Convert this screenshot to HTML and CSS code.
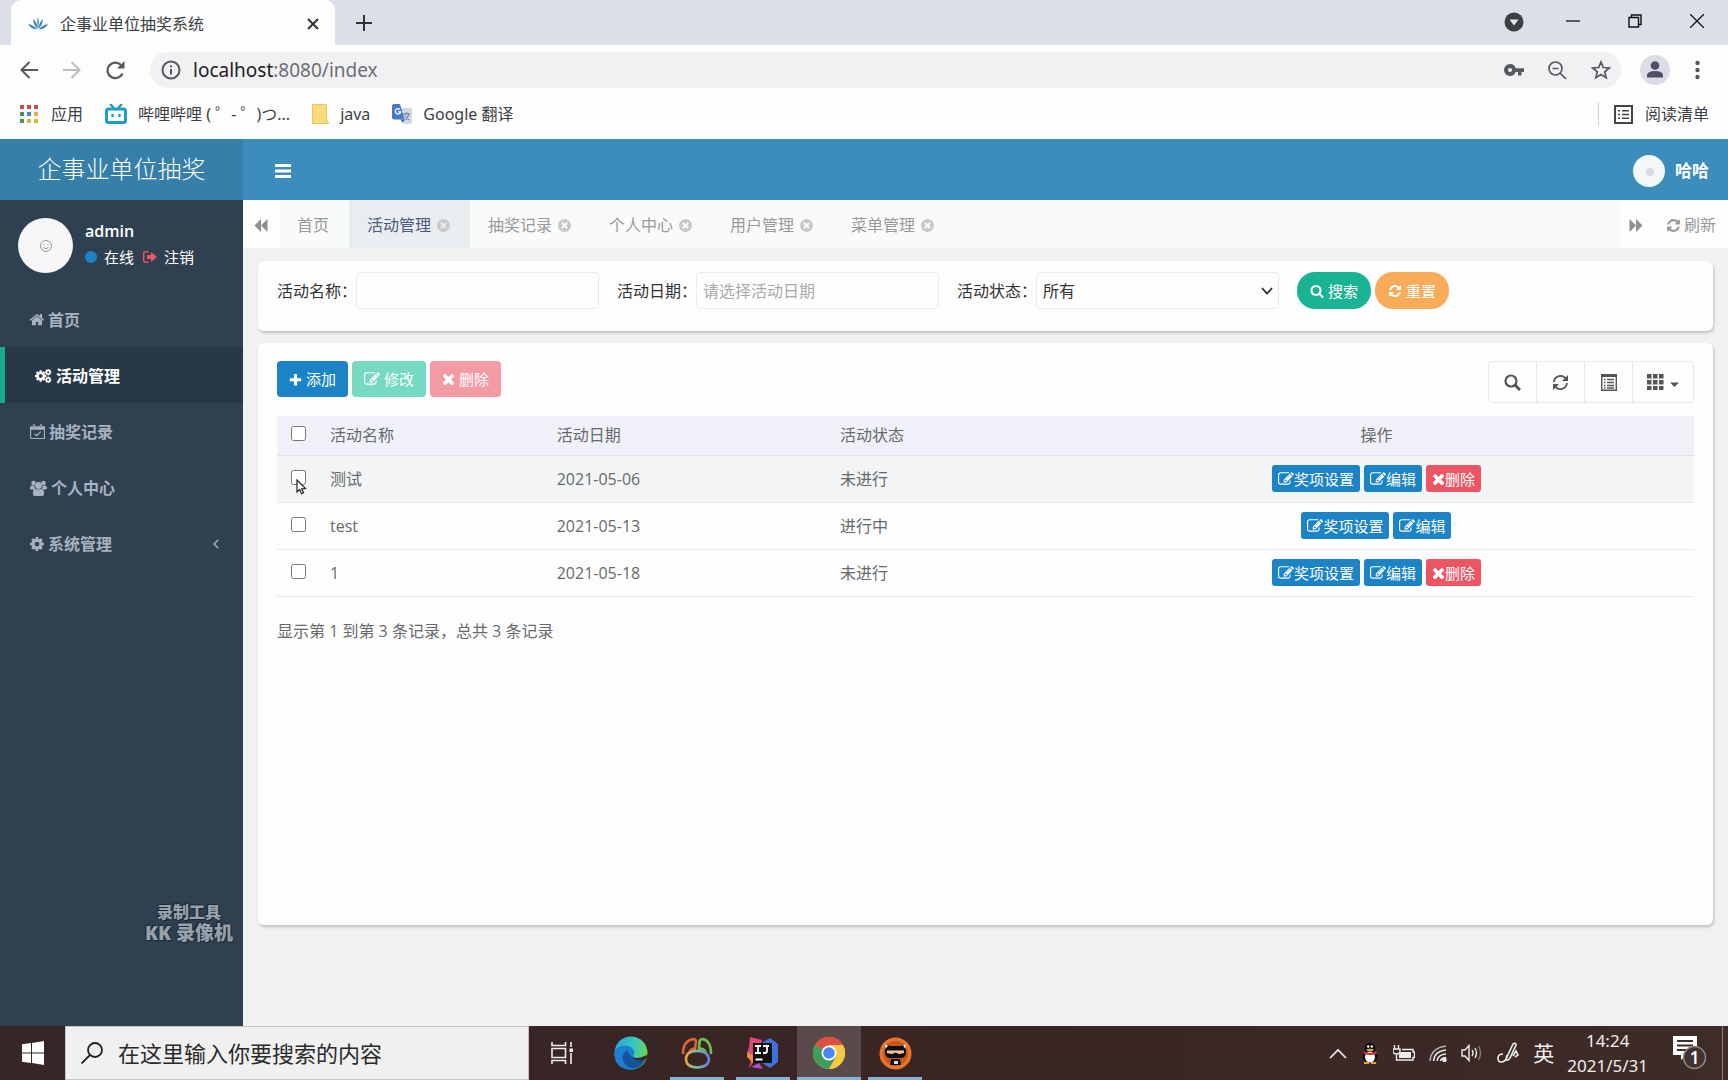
FILE: index.html
```html
<!DOCTYPE html>
<html lang="zh-CN">
<head>
<meta charset="utf-8">
<title>企事业单位抽奖系统</title>
<link rel="stylesheet" href="styles.css">
</head>
<body>
<svg class="sprite" aria-hidden="true">
  <symbol id="home" viewBox="100 130 1592 1592"><path d="M1472 992v480q0 26-19 45t-45 19h-384v-384h-256v384h-384q-26 0-45-19t-19-45v-480q0-1 .5-3t.5-3l575-474 575 474q1 2 1 6zm223-69l-62 74q-8 9-21 11h-3q-13 0-21-7l-692-577-692 577q-12 8-24 7-13-2-21-11l-62-74q-8-10-7-23.500t11-21.500l719-599q32-26 76-26t76 26l244 204v-195q0-14 9-23t23-9h192q14 0 23 9t9 23v408l219 182q10 8 11 21.500t-7 23.500z"/></symbol>
  <symbol id="search" viewBox="0 0 1792 1792"><path d="M1216 832q0-185-131.500-316.500t-316.500-131.500-316.500 131.500-131.500 316.500 131.500 316.500 316.500 131.500 316.500-131.500 131.500-316.500zm512 832q0 52-38 90t-90 38q-54 0-90-38l-343-342q-179 124-399 124-143 0-273.500-55.500t-225-150-150-225-55.500-273.500 55.500-273.500 150-225 225-150 273.500-55.500 273.500 55.500 225 150 150 225 55.500 273.500q0 220-124 399l343 343q37 37 37 90z"/></symbol>
  <symbol id="refresh" viewBox="0 0 1792 1792"><path d="M1639 1056q0 5-1 7-64 268-268 434.500t-478 166.500q-146 0-282.500-55t-243.500-157l-129 129q-19 19-45 19t-45-19-19-45v-448q0-26 19-45t45-19h448q26 0 45 19t19 45-19 45l-137 137q71 66 161 102t187 36q134 0 250-65t186-179q11-17 53-117 8-23 30-23h192q13 0 22.500 9.500t9.500 22.500zm25-800v448q0 26-19 45t-45 19h-448q-26 0-45-19t-19-45 19-45l138-138q-148-137-349-137-134 0-250 65t-186 179q-11 17-53 117-8 23-30 23h-199q-13 0-22.500-9.500t-9.500-22.500v-7q65-268 270-434.500t480-166.500q146 0 284 55.500t245 156.500l130-129q19-19 45-19t45 19 19 45z"/></symbol>
  <symbol id="close" viewBox="0 0 1792 1792"><path d="M1277 1122q0-26-19-45l-181-181 181-181q19-19 19-45 0-27-19-46l-90-90q-19-19-46-19-26 0-45 19l-181 181-181-181q-19-19-45-19-27 0-46 19l-90 90q-19 19-19 46 0 26 19 45l181 181-181 181q-19 19-19 45 0 27 19 46l90 90q19 19 46 19 26 0 45-19l181-181 181 181q19 19 45 19 27 0 46-19l90-90q19-19 19-46zm387-226q0 209-103 385.500t-279.500 279.500-385.500 103-385.500-103-279.500-279.500-103-385.500 103-385.500 279.500-279.500 385.500-103 385.500 103 279.500 279.500 103 385.500z"/></symbol>
  <symbol id="plus" viewBox="100 0 1592 1592"><path d="M1600 736v192q0 40-28 68t-68 28h-416v416q0 40-28 68t-68 28h-192q-40 0-68-28t-28-68v-416h-416q-40 0-68-28t-28-68v-192q0-40 28-68t68-28h416v-416q0-40 28-68t68-28h192q40 0 68 28t28 68v416h416q40 0 68 28t28 68z"/></symbol>
  <symbol id="remove" viewBox="256 256 1280 1280"><path d="M1490 1322q0 40-28 68l-136 136q-28 28-68 28t-68-28l-294-294-294 294q-28 28-68 28t-68-28l-136-136q-28-28-28-68t28-68l294-294-294-294q-28-28-28-68t28-68l136-136q28-28 68-28t68 28l294 294 294-294q28-28 68-28t68 28l136 136q28 28 28 68t-28 68l-294 294 294 294q28 28 28 68z"/></symbol>
  <symbol id="edit" viewBox="0 0 1792 1792"><path d="M888 1184l116-116-152-152-116 116v56h96v96h56zm440-720q-16-16-33 1l-350 350q-17 17-1 33t33-1l350-350q17-17 1-33zm80 594v190q0 119-84.500 203.500t-203.500 84.500h-832q-119 0-203.500-84.500t-84.500-203.500v-832q0-119 84.500-203.500t203.500-84.500h832q63 0 117 25 15 7 18 23 3 17-9 29l-49 49q-14 14-32 8-23-6-45-6h-832q-66 0-113 47t-47 113v832q0 66 47 113t113 47h832q66 0 113-47t47-113v-126q0-13 9-22l64-64q15-15 35-7t20 29zm-96-738l288 288-672 672h-288v-288zm444 132l-92 92-288-288 92-92q28-28 68-28t68 28l152 152q28 28 28 68t-28 68z"/></symbol>
  <symbol id="cog" viewBox="0 0 1792 1792"><path d="M1152 896q0-106-75-181t-181-75-181 75-75 181 75 181 181 75 181-75 75-181zm512-109v222q0 12-8 23t-20 13l-185 28q-19 54-39 91 35 50 107 138 10 12 10 25t-9 23q-27 37-99 108t-94 71q-12 0-26-9l-138-108q-44 23-91 38-16 136-29 186-7 28-36 28h-222q-14 0-24.500-8.500t-11.500-21.500l-28-184q-49-16-90-37l-141 107q-10 9-25 9-14 0-25-11-126-114-165-168-7-10-7-23 0-12 8-23 15-21 51-66.500t54-70.500q-27-50-41-99l-183-27q-13-2-21-12.500t-8-23.500v-222q0-12 8-23t19-13l186-28q14-46 39-92-40-57-107-138-10-12-10-24 0-10 9-23 26-36 98.500-107.500t94.500-71.500q13 0 26 10l138 107q44-23 91-38 16-136 29-186 7-28 36-28h222q14 0 24.500 8.500t11.500 21.500l28 184q49 16 90 37l142-107q9-9 24-9 13 0 25 10 129 119 165 170 7 8 7 22 0 12-8 23-15 21-51 66.500t-54 70.500q26 50 41 98l183 28q13 2 21 12.500t8 23.500z"/></symbol>
  <symbol id="cogs" viewBox="0 0 18 16"><use href="#cog" x="-1" y="1" width="14" height="14"/><use href="#cog" x="10" y="0" width="8" height="8"/><use href="#cog" x="10" y="8" width="8" height="8"/></symbol>
  <symbol id="calendar" viewBox="0 0 16 16"><path fill-rule="evenodd" d="M1 2.500h2V1.200Q3 .2 4 .2h.5q1 0 1 1v1.300h5V1.200q0-1 1-1h.5q1 0 1 1v1.300h2q1 0 1 1V15q0 1-1 1H1q-1 0-1-1V3.500q0-1 1-1zM1.200 6v8.800h13.600V6zM4 1v3h.6V1zm7.400 0v3h.6V1z"/><path d="M4.800 10.300l2.300 2.300 4.300-4.500" fill="none" stroke="currentColor" stroke-width="1.400"/></symbol>
  <symbol id="users" viewBox="0 0 17 16"><circle cx="3.500" cy="3" r="2.300"/><circle cx="13.500" cy="3" r="2.300"/><circle cx="8.500" cy="5.500" r="3.400"/><path d="M0 8.500Q0 5.500 2 5.500h2.500q-.5 2 1 4H1.500Q0 9.500 0 8.500zm17 0q0-3-2-3h-2.500q.5 2-1 4h4Q17 9.500 17 8.500zM2.800 13.500q0-4.800 3-4.800 2.700 1.500 5.400 0 3 0 3 4.800 0 2.500-2.200 2.500H5q-2.200 0-2.200-2.500z"/></symbol>
  <symbol id="signout" viewBox="0 0 14 12"><path d="M5.500.7H2.700Q.7.700.7 2.700v6.600q0 2 2 2h2.800" fill="none" stroke="currentColor" stroke-width="1.400"/><path d="M4 4h4V1l6 5-6 5V8H4z"/></symbol>
  <symbol id="forward" viewBox="0 0 14 14"><path d="M0 0l7 7-7 7zM7 0l7 7-7 7z"/></symbol>
  <symbol id="backward" viewBox="0 0 14 14"><path d="M7 0L0 7l7 7zM14 0L7 7l7 7z"/></symbol>
</svg>

<header class="browser">
  <div class="tabstrip">
    <div class="btab">
      <svg width="20" height="14" viewBox="0 0 20 14" fill="#3b83b8"><path d="M10 0q1.500 5 0 12-1.500-7 0-12zM5 2q4 3 4.500 10Q5.500 8 5 2zm10 0q-4 3-4.500 10Q14.500 8 15 2zM0 7q6 1 9 5.500Q3 12 0 7zm20 0q-6 1-9 5.500Q17 12 20 7z"/></svg>
      <span class="btitle">企事业单位抽奖系统</span>
      <button class="plain" aria-label="关闭标签页"><svg width="12" height="12" viewBox="0 0 12 12" stroke="#333" stroke-width="2"><path d="M1 1l10 10M11 1L1 11"/></svg></button>
    </div>
    <button class="plain newtab" aria-label="新标签页"><svg width="16" height="16" viewBox="0 0 16 16" stroke="#333" stroke-width="2"><path d="M8 0v16M0 8h16"/></svg></button>
    <div class="winbtns">
      <button class="plain find" aria-label="搜索标签页"><svg width="20" height="20" viewBox="0 0 20 20"><circle cx="10" cy="10" r="9.500" fill="#3c4043"/><path d="M5.500 7.500h9L10 13.500z" fill="#e8eaed"/></svg></button>
      <button class="plain" aria-label="最小化"><svg width="14" height="14" viewBox="0 0 14 14" stroke="#111" stroke-width="1.300"><path d="M0 7h14"/></svg></button>
      <button class="plain" aria-label="还原"><svg width="14" height="14" viewBox="0 0 14 14" stroke="#111" stroke-width="1.400" fill="none"><path d="M1 3.500h9.500V13H1zM3.500 3.500V1H13v9.500h-2.500"/></svg></button>
      <button class="plain" aria-label="关闭"><svg width="14" height="14" viewBox="0 0 14 14" stroke="#111" stroke-width="1.300"><path d="M0 0l14 14M14 0L0 14"/></svg></button>
    </div>
  </div>
  <div class="toolbar">
    <button class="plain" aria-label="后退"><svg width="18" height="18" viewBox="0 0 18 18" fill="none" stroke="#55585c" stroke-width="2"><path d="M18 9H2M9.500 1L1.500 9l8 8"/></svg></button>
    <button class="plain" aria-label="前进"><svg width="18" height="18" viewBox="0 0 18 18" fill="none" stroke="#bcbec2" stroke-width="2"><path d="M0 9h16M8.500 1l8 8-8 8"/></svg></button>
    <button class="plain" aria-label="刷新"><svg width="19" height="19" viewBox="0 0 19 19" fill="none" stroke="#55585c" stroke-width="2.200"><path d="M16.500 12.500A7.800 7.800 0 1 1 15 4"/><path d="M18.500 0v7.500H11z" fill="#55585c" stroke="none"/></svg></button>
    <div class="omnibox">
      <svg width="20" height="20" viewBox="0 0 20 20" fill="none" stroke="#55585c" stroke-width="2"><circle cx="10" cy="10" r="8.500"/><path d="M10 9v5.500M10 5.200v2"/></svg>
      <span class="url"><b>localhost</b>:8080/index</span>
      <svg width="20" height="12" viewBox="0 0 20 12"><path fill-rule="evenodd" fill="#55585c" d="M6 0a6 6 0 1 0 5.700 8H14v3.500h3.500V8H20V4.300h-8.300A6 6 0 0 0 6 0zm0 4a2 2 0 1 1 0 4 2 2 0 0 1 0-4z"/></svg>
      <svg width="19" height="19" viewBox="0 0 19 19" fill="none" stroke="#55585c" stroke-width="1.700"><circle cx="7.500" cy="7.500" r="6.500"/><path d="M12 12l6 6M4.500 7.500h6"/></svg>
      <svg width="20" height="20" viewBox="0 0 20 20" fill="none" stroke="#55585c" stroke-width="1.700"><path d="M10 2l2.300 5.500 6 .5-4.600 3.900 1.500 5.900L10 14.600l-5.200 3.200 1.500-5.900L1.700 8l6-.5z"/></svg>
    </div>
    <button class="plain" aria-label="个人资料"><svg width="30" height="30" viewBox="0 0 30 30"><circle cx="15" cy="15" r="15" fill="#dcdde4"/><circle cx="15" cy="10.500" r="4.300" fill="#4b5267"/><path d="M7 22.500v-2q0-4.500 8-4.500t8 4.500v2z" fill="#4b5267"/></svg></button>
    <button class="plain" aria-label="菜单"><svg width="5" height="20" viewBox="0 0 5 20" fill="#55585c"><circle cx="2.500" cy="3" r="2.200"/><circle cx="2.500" cy="10" r="2.200"/><circle cx="2.500" cy="17" r="2.200"/></svg></button>
  </div>
  <nav class="bookmarks">
    <a href="#" class="appsmark"><svg width="18" height="18" viewBox="0 0 18 18"><path fill="#c94f48" d="M0 0h4v4H0zM7 0h4v4H7zM14 0h4v4h-4z"/><path fill="#43965a" d="M0 7h4v4H0zM0 14h4v4H0z"/><path fill="#4285d8" d="M7 7h4v4H7z"/><path fill="#e3b23c" d="M14 7h4v4h-4zM7 14h4v4H7zM14 14h4v4h-4z"/></svg>应用</a>
    <a href="#"><svg width="22" height="20" viewBox="0 0 22 20" fill="none" stroke="#1c9fc4" stroke-width="3"><rect x="1.500" y="5" width="19" height="13.500" rx="2"/><path d="M5 0l4 4M17 0l-4 4M7.500 10v3M14.500 10v3" stroke-width="2.400"/></svg>哔哩哔哩 (&nbsp;゜-&nbsp;゜)つ...</a>
    <a href="#"><svg width="17" height="20" viewBox="0 0 17 20"><path fill="#f8dc7c" stroke="#e9c75c" d="M.5.500h14v14l2 5H.5z"/></svg>java</a>
    <a href="#"><svg width="20" height="20" viewBox="0 0 20 20"><path fill="#d5dae2" d="M8 4h10q2 0 2 2v12q0 2-2 2h-6z"/><path stroke="#7c8fae" fill="none" stroke-width="1.300" d="M11 10h7M14.500 8v2M17 10q-1 4-4 6M12.500 11.500q2 3 5 4.500"/><path fill="#4779c9" d="M2 0h6l4.500 15.500H2q-2 0-2-2V2q0-2 2-2z"/><path fill="#2f5fb0" d="M8.500 15.500h4L11 19z"/><path d="M8 5.500a2.700 2.700 0 1 0 .7 2.400H6" fill="none" stroke="#fff" stroke-width="1.300"/></svg>Google 翻译</a>
    <a href="#" class="reading"><svg width="19" height="19" viewBox="0 0 19 19" fill="none" stroke="#444" stroke-width="2"><path d="M1 1h17v17H1z"/><path d="M4 5.700h2M4 9.500h2M4 13.300h2M8 5.700h7M8 9.500h7M8 13.300h7" stroke-width="1.600"/></svg>阅读清单</a>
  </nav>
</header>

<div class="app">
  <aside class="sidebar">
    <a href="#" class="logo">企事业单位抽奖</a>
    <div class="user">
      <svg width="55" height="55" viewBox="0 0 55 55"><circle cx="27.500" cy="27.500" r="27.500" fill="#f6f6f8"/><g fill="none" stroke="#999"><circle cx="28" cy="28" r="5.500"/><path d="M25.500 29.500q2.500 2.500 5 0M26 26v1M30 26v1"/></g></svg>
      <div>
        <p class="name">admin</p>
        <p class="state"><i class="dot"></i><a href="#">在线</a><svg class="out" width="14" height="12"><use href="#signout"/></svg><a href="#">注销</a></p>
      </div>
    </div>
    <nav class="menu">
      <a href="#"><svg width="14" height="14"><use href="#home"/></svg>首页</a>
      <a href="#" class="on"><svg width="17" height="16"><use href="#cogs"/></svg>活动管理</a>
      <a href="#"><svg width="15" height="15"><use href="#calendar"/></svg>抽奖记录</a>
      <a href="#"><svg width="17" height="16"><use href="#users"/></svg>个人中心</a>
      <a href="#"><svg width="14" height="14" viewBox="120 120 1552 1552"><use href="#cog" width="1792" height="1792"/></svg>系统管理<svg class="more" width="6" height="10" viewBox="0 0 6 10" fill="none" stroke="currentColor" stroke-width="1.500"><path d="M5.300.7L1 5l4.300 4.300"/></svg></a>
    </nav>
    <div class="mark"><span>录制工具</span><span class="big">KK 录像机</span></div>
  </aside>
  <div class="main">
    <div class="topbar">
      <button class="plain" aria-label="折叠菜单"><svg width="16" height="14" viewBox="0 0 16 14" fill="#fff"><path d="M0 0h16v3H0zM0 5.500h16v3H0zM0 11h16v3H0z"/></svg></button>
      <a href="#" class="me"><svg width="32" height="32" viewBox="0 0 32 32"><circle cx="16" cy="16" r="16" fill="#f4f6f8"/><circle cx="17" cy="17" r="4" fill="#d9dcdf"/></svg>哈哈</a>
    </div>
    <nav class="tabs">
      <button class="plain roll" aria-label="向左"><svg width="14" height="13"><use href="#backward"/></svg></button>
      <a href="#" class="first">首页</a>
      <a href="#" class="on">活动管理<svg width="15" height="15"><use href="#close"/></svg></a>
      <a href="#">抽奖记录<svg width="15" height="15"><use href="#close"/></svg></a>
      <a href="#">个人中心<svg width="15" height="15"><use href="#close"/></svg></a>
      <a href="#">用户管理<svg width="15" height="15"><use href="#close"/></svg></a>
      <a href="#">菜单管理<svg width="15" height="15"><use href="#close"/></svg></a>
      <button class="plain roll right" aria-label="向右"><svg width="14" height="13"><use href="#forward"/></svg></button>
      <button class="plain reload"><svg width="15" height="15"><use href="#refresh"/></svg>刷新</button>
    </nav>
    <main class="content">
      <form class="panel filter">
        <label for="f-name">活动名称：</label><input id="f-name" type="text">
        <label for="f-date">活动日期：</label><input id="f-date" type="text" placeholder="请选择活动日期">
        <label for="f-state">活动状态：</label><span class="pick"><select id="f-state"><option>所有</option></select><svg width="12" height="8" viewBox="0 0 12 8" fill="none" stroke="#222" stroke-width="1.600"><path d="M1 1l5 5.500L11 1"/></svg></span>
        <button type="button" class="btn round green"><svg width="14" height="14"><use href="#search"/></svg>搜索</button>
        <button type="button" class="btn round orange"><svg width="14" height="14"><use href="#refresh"/></svg>重置</button>
      </form>
      <section class="panel list">
        <div class="actions">
          <button class="btn blue"><svg width="13" height="13"><use href="#plus"/></svg>添加</button>
          <button class="btn green dim"><svg width="16" height="16"><use href="#edit"/></svg>修改</button>
          <button class="btn red dim"><svg width="13" height="12"><use href="#remove"/></svg>删除</button>
          <div class="tools">
            <button aria-label="搜索"><svg width="17" height="17" viewBox="0 0 17 17" fill="none" stroke="#555"><circle cx="7" cy="7" r="5.500" stroke-width="2.200"/><path d="M11 11l5 5" stroke-width="3"/></svg></button>
            <button aria-label="刷新"><svg width="17" height="17" viewBox="0 0 17 17" fill="none" stroke="#555" stroke-width="1.800"><path d="M2 8a6.500 6.500 0 0 1 12-3M15 9a6.500 6.500 0 0 1-12 3"/><path d="M16 1v6h-6zM1 16v-6h6z" fill="#555" stroke="none"/></svg></button>
            <button aria-label="切换视图"><svg width="16" height="17" viewBox="0 0 16 17" fill="none" stroke="#555"><path d="M.700.700h14.600v15.600H.700z" stroke-width="1.400"/><path d="M0 1.500h16" stroke-width="3"/><path d="M3 5.500h1.500M3 8.500h1.500M3 11.500h1.500M6 5.500h7M6 8.500h7M6 11.500h7M3 14h1.500M6 14h7" stroke-width="1.300"/></svg></button>
            <button aria-label="列"><svg width="33" height="16" viewBox="0 0 33 16" fill="#555"><path d="M0 0h4.500v4.500H0zM6 0h4.500v4.500H6zM12 0h4.500v4.500H12zM0 6h4.500v4.500H0zM6 6h4.500v4.500H6zM12 6h4.500v4.500H12zM0 12h4.500v4H0zM6 12h4.500v4H6zM12 12h4.500v4H12zM23 8.500h9L27.500 13z"/></svg></button>
          </div>
        </div>
        <table>
          <thead><tr><th class="c-box"><input type="checkbox" aria-label="全选"></th><th class="c-name">活动名称</th><th class="c-date">活动日期</th><th class="c-state">活动状态</th><th class="c-ops">操作</th></tr></thead>
          <tbody>
            <tr class="hover"><td class="c-box"><input type="checkbox" aria-label="选择 测试"><svg class="cursor" width="11" height="16" viewBox="0 0 11 16"><path d="M1 1v12l2.700-2.500 1.800 4.200 2-.9-1.800-4L9.500 9.500z" fill="#fff" stroke="#222" stroke-width="1.200"/></svg></td><td>测试</td><td>2021-05-06</td><td>未进行</td>
              <td class="c-ops"><div class="ops"><button class="btn small blue"><svg width="16" height="16"><use href="#edit"/></svg>奖项设置</button><button class="btn small blue"><svg width="16" height="16"><use href="#edit"/></svg>编辑</button><button class="btn small red"><svg width="13" height="12"><use href="#remove"/></svg>删除</button></div></td></tr>
            <tr><td class="c-box"><input type="checkbox" aria-label="选择 test"></td><td>test</td><td>2021-05-13</td><td>进行中</td>
              <td class="c-ops"><div class="ops"><button class="btn small blue"><svg width="16" height="16"><use href="#edit"/></svg>奖项设置</button><button class="btn small blue"><svg width="16" height="16"><use href="#edit"/></svg>编辑</button></div></td></tr>
            <tr><td class="c-box"><input type="checkbox" aria-label="选择 1"></td><td>1</td><td>2021-05-18</td><td>未进行</td>
              <td class="c-ops"><div class="ops"><button class="btn small blue"><svg width="16" height="16"><use href="#edit"/></svg>奖项设置</button><button class="btn small blue"><svg width="16" height="16"><use href="#edit"/></svg>编辑</button><button class="btn small red"><svg width="13" height="12"><use href="#remove"/></svg>删除</button></div></td></tr>
          </tbody>
        </table>
        <p class="info">显示第 1 到第 3 条记录，总共 3 条记录</p>
      </section>
    </main>
  </div>
</div>

<footer class="taskbar">
  <button class="plain start" aria-label="开始"><svg width="22" height="24" viewBox="0 0 22 24" fill="#fff"><path d="M0 3.300l9-1.300v9.500H0zM10 1.900L22 0v11.500H10zM0 12.500h9V22l-9-1.300zM10 12.500h12V24l-12-1.900z"/></svg></button>
  <label class="wsearch"><svg width="22" height="22" viewBox="0 0 22 22" fill="none" stroke="#222" stroke-width="1.800"><circle cx="14" cy="8" r="7"/><path d="M9 13l-8.500 8.500"/></svg><input type="text" aria-label="搜索" placeholder="在这里输入你要搜索的内容"></label>
  <div class="apps">
    <button class="plain view" aria-label="任务视图"><svg width="22" height="22" viewBox="0 0 22 22" fill="none" stroke="#eee" stroke-width="1.600"><path d="M1 0v3.500h13.500V0M1 22v-3.500h13.500V22M1 6.500h13.500v9H1zM20 0v5M20 11v11"/><path d="M18.500 6.500h3.500v3.500h-3.500z" fill="#eee" stroke="none"/></svg></button>
    <button class="plain" aria-label="Edge"><svg width="34" height="34" viewBox="0 0 34 34"><defs><linearGradient id="eg" x1="0" x2="1" y1=".3" y2=".5"><stop offset="0" stop-color="#2ba6e0"/><stop offset=".6" stop-color="#39c9b4"/><stop offset="1" stop-color="#6cd94f"/></linearGradient></defs><circle cx="17" cy="17" r="16.500" fill="url(#eg)"/><path d="M.5 18C1 9 14 7 19 13q3 3.500 0 7 5 5 13 2-5 11-16 11.500Q1 33 .5 18z" fill="#1d7fd0"/><path d="M13 14q-8 6-2 14 5 6 13 3.500 5-2.500 8-9.500-8 5-14-1-3-3-5-7z" fill="#15549c"/><path d="M18 21q5 3 15.800-2.500Q33 21 32 23q-9 4-14-2z" fill="#3a2828"/></svg></button>
    <button class="plain open" aria-label="Navicat"><svg width="32" height="32" viewBox="0 0 32 32" fill="none" stroke-width="2.600"><defs><linearGradient id="ng" x1="0" x2="1"><stop offset="0" stop-color="#e8a23c"/><stop offset=".4" stop-color="#7fc2a8"/><stop offset="1" stop-color="#6a7fd8"/></linearGradient></defs><path d="M2 17Q2 4 12 2q3 0 3 3l-1 7q-4-1-6 4" stroke="#e2632f"/><path d="M30 17Q30 4 22 2q-3 0-3.500 3l-.5 7q5-1 7 4" stroke="#6cbf52"/><path d="M5 22q0-8 11-8t12 8q0 8-12 8.500Q5 30 5 22z" stroke="url(#ng)"/></svg></button>
    <button class="plain open" aria-label="IntelliJ IDEA"><svg width="32" height="32" viewBox="0 0 32 32"><path d="M3 0l12 3-2 14L2 31l2-9-4-5 2-7z" fill="#e0457b"/><path d="M0 15l6 3v8l-6-6z" fill="#f08a3c"/><path d="M16 5l7-4 8 6v18l-8 6-8-5z" fill="#3f72e0"/><path d="M12 26l4 6-12-2z" fill="#b04fc0"/><path d="M6 6h19v20H6z" fill="#111"/><path d="M8 9h6M11 9v7M8 16h6M16 9h6M20 9v5q0 2-2 2h-2M8.500 22.500h7" stroke="#fff" stroke-width="1.800" fill="none"/></svg></button>
    <button class="plain open current" aria-label="Chrome"><svg width="32" height="32" viewBox="0 0 32 32"><circle cx="16" cy="16" r="16" fill="#f6c945"/><path d="M16 16L2.100 8A16 16 0 0 1 29.900 8z" fill="#dd5044"/><path d="M2.100 8A16 16 0 0 0 16 32l7-12-7-4z" fill="#3c9e58"/><path d="M16 8h13.900l-6 9z" fill="#dd5044"/><path d="M29.900 8H16v8l7 4-7 12A16 16 0 0 0 29.900 8z" fill="#f6c945"/><circle cx="16" cy="16" r="7.500" fill="#fff"/><circle cx="16" cy="16" r="5.800" fill="#4a87ee"/></svg></button>
    <button class="plain open" aria-label="KK 录像机"><svg width="33" height="33" viewBox="0 0 33 33"><circle cx="16.500" cy="16.500" r="16" fill="#e8752a"/><circle cx="16.500" cy="16.500" r="12.500" fill="#c9571a"/><path d="M6 7l5 2h11l5-2v8q0 5-4 6H10q-4-1-4-6z" fill="#111"/><path d="M6 7l3 1.500L6.500 12zM27 7l-3 1.500 2.500 3.500z" fill="#fff"/><path d="M8 13.500h17v2.500l-5 1-3.500-1.500L13 17l-5-1z" fill="#f3c9a0"/><path d="M12 22h9l1 6H11z" fill="#111"/><path d="M15 24h4v3h-4z" fill="#ddd"/></svg></button>
  </div>
  <div class="tray">
    <svg width="18" height="11" viewBox="0 0 18 11" fill="none" stroke="#eee" stroke-width="1.700"><path d="M1 10l8-8 8 8"/></svg>
    <svg width="18" height="22" viewBox="0 0 18 22"><ellipse cx="9" cy="14" rx="7.500" ry="7" fill="#111"/><ellipse cx="9" cy="6.500" rx="5.500" ry="6" fill="#111"/><ellipse cx="9" cy="15" rx="5" ry="5.500" fill="#fff"/><path d="M2.500 9q6.500 4 13 0l.5 2.500q-7 3-13.500 0z" fill="#d8303a"/><ellipse cx="9" cy="8" rx="3.500" ry="1.200" fill="#e9a13a"/><circle cx="7.200" cy="4.500" r="1.200" fill="#fff"/><circle cx="10.800" cy="4.500" r="1.200" fill="#fff"/><path d="M3 20h5v2H3zM10 20h5v2h-5z" fill="#e9a13a"/></svg>
    <svg width="22" height="17" viewBox="0 0 22 17" fill="none" stroke="#eee" stroke-width="1.400"><path d="M1.500 0v4M5.500 0v4M0 4h7v2.500Q7 9 3.500 9 0 9 0 6.500zM3.500 9v6H20v-2.500h1.500V7H20V4.500H9"/><path d="M8 7h10v6H6V9.500z" fill="#eee" stroke="none"/></svg>
    <svg width="18" height="17" viewBox="0 0 18 17" fill="none" stroke="#eee" stroke-width="1.500"><path d="M1 16Q2 3 17 1" opacity=".7"/><path d="M4.500 16Q5.500 6 17 5M8 16q1-6.500 9-7M11.500 16q.5-3 5.500-3.500"/><circle cx="15.500" cy="15" r="1.500" fill="#eee"/></svg>
    <svg width="22" height="18" viewBox="0 0 22 18" fill="none" stroke="#eee" stroke-width="1.400"><path d="M1 6v6h3l4 4.500v-15L4 6zM11 6q2 3 0 6M14 4q3 5 0 10"/><path d="M17.500 2q4 7 0 14" opacity=".4"/></svg>
    <svg width="22" height="22" viewBox="0 0 22 22" fill="none" stroke="#eee" stroke-width="1.600"><path d="M6 12q-5 0-5 4t3 4q4 0 5.500-4L16 2q3-2 3 1l-6 13q-3 4-4 1l1-4M16 14l3-5 2 4-3 2"/></svg>
    <span class="ime">英</span>
    <span class="clock">14:24<br>2021/5/31</span>
    <svg width="34" height="34" viewBox="0 0 34 34"><path d="M0 0h24v19H13l-5 5v-5H0z" fill="#fff"/><path d="M4 5h16M4 9.500h16M4 14h11" stroke="#3f2d2a" stroke-width="2"/><circle cx="21.500" cy="21.500" r="11" fill="#3f3230" stroke="#8d8583" stroke-width="1.500"/><text x="21.500" y="28" text-anchor="middle" class="badge">1</text></svg>
    <i class="peek"></i>
  </div>
</footer>
</body>
</html>
```
FILE: styles.css
```css
* { box-sizing: border-box; }
body {
  margin: 0;
  min-height: 100vh;
  display: flex;
  flex-direction: column;
  font: 16px/24px "Open Sans", "Noto Sans CJK SC", sans-serif;
  color: #676a6c;
}
p { margin: 0; }
a { color: inherit; text-decoration: none; }
svg { flex: none; }
svg:not([fill]) { fill: currentColor; }
button, input, select { font: inherit; color: inherit; }
.sprite { position: absolute; width: 0; height: 0; }
.plain {
  display: flex;
  align-items: center;
  justify-content: center;
  padding: 0;
  border: 0;
  background: none;
}

/* browser window */
.browser { background: #fdfdfe; color: #3c4043; font-family: "Noto Sans", "Noto Sans CJK SC", sans-serif; }
.tabstrip { display: flex; height: 45px; background: #dbdfe8; padding-left: 11px; }
.btab {
  display: flex;
  align-items: center;
  width: 324px;
  padding: 2px 16px 0 17px;
  background: #fdfdfe;
  border-radius: 10px 10px 0 0;
}
.btitle { flex: 1; margin-left: 12px; }
.newtab { width: 58px; }
.winbtns { display: flex; margin-left: auto; padding: 0 24px 4px 0; gap: 48px; }
.find { margin: 2px -6px 0 0; }
.toolbar { display: flex; align-items: center; height: 50px; padding: 0 28px 0 20px; gap: 25px; }
.omnibox {
  flex: 1;
  display: flex;
  align-items: center;
  height: 36px;
  margin-right: -6px;
  padding: 0 10px 0 11px;
  gap: 24px;
  border-radius: 18px;
  background: #f1f1f3;
}
.url { flex: 1; margin-left: -12px; font-size: 19px; color: #6b6e72; }
.url b { font-weight: 400; color: #202124; }
.bookmarks { display: flex; align-items: center; height: 44px; padding: 0 19px 6px 20px; gap: 22px; }
.bookmarks a { display: flex; align-items: center; gap: 11px; }
.bookmarks .appsmark { gap: 13px; }
.bookmarks .reading { margin-left: auto; padding-left: 15px; border-left: 1px solid #cfd1d5; gap: 12px; }

/* sidebar */
.app { flex: 1; display: flex; }
.sidebar { position: relative; width: 243px; flex: none; background: #2f4050; }
.logo {
  display: block;
  height: 61px;
  line-height: 60px;
  background: #367fa9;
  color: #fff;
  font-size: 24px;
  font-weight: 300;
  text-align: center;
}
.user { display: flex; gap: 12px; padding: 18px; color: #fff; }
.name { padding-top: 1px; font-weight: 600; }
.state { display: flex; align-items: center; font-size: 15px; line-height: 28px; }
.dot { width: 12px; height: 12px; margin-right: 7px; border-radius: 50%; background: #1c84c6; }
.out { color: #ed5565; margin: 0 7px 0 9px; }
.menu { display: flex; flex-direction: column; color: #a7b1c2; font-weight: 700; }
.menu a { display: flex; align-items: center; gap: 4px; height: 56px; padding: 1px 24px 0 30px; }
.menu .on { border-left: 5px solid #19aa8d; background: #293846; color: #fff; }
.menu .more { margin-left: auto; }
.mark {
  position: absolute;
  right: 10px;
  bottom: 82px;
  text-align: center;
  font-size: 16px;
  font-weight: 900;
  line-height: 21px;
  color: #97a1ab;
  text-shadow: 1px 1px 1px #1b2732, -1px -1px 1px #1b2732;
}
.mark span { display: block; }
.mark .big { font-size: 19px; }

/* page header and tabs */
.main { flex: 1; display: flex; flex-direction: column; min-width: 0; background: #eff1f2; }
.topbar { display: flex; align-items: center; justify-content: space-between; height: 61px; padding: 2px 19px 0 32px; background: #3c8dbc; }
.me { display: flex; align-items: center; gap: 10px; color: #fff; font-size: 17px; font-weight: 700; }
.tabs { display: flex; height: 48px; background: #f9fbfb; color: #999; }
.tabs > * { padding-top: 2px; }
.tabs a { display: flex; align-items: center; gap: 5px; width: 121px; padding-left: 18px; }
.tabs a svg { color: #c8c8c8; }
.tabs .first { width: 70px; }
.tabs .on { background: #eaedf0; color: #4a5a80; }
.roll { width: 36px; background: #fdfdfe; color: #8e8e8e; }
.tabs .right { margin-left: auto; }
.reload { gap: 3px; padding-right: 12px; padding-left: 12px; background: #fdfdfe; color: #999; }

/* content */
.content { flex: 1; display: flex; flex-direction: column; gap: 12px; padding: 13px 15px 101px; }
.panel { background: #fdfdfe; border-radius: 6px; box-shadow: 1px 2px 3px rgba(0, 0, 0, .2); }
.filter { display: flex; align-items: center; padding: 11px 19px 22px; color: #333; }
.filter input, .filter select {
  width: 243px;
  height: 37px;
  padding: 0 6px;
  border: 1px solid #e9ebed;
  border-radius: 4px;
  background: #fdfdfe;
  outline: 0;
}
.filter input { margin-right: 18px; }
.filter label { width: 79px; white-space: nowrap; }
::placeholder { color: #aaa; opacity: 1; }
.pick { position: relative; margin-right: 18px; }
.pick select { appearance: none; display: block; }
.pick svg { position: absolute; right: 6px; top: 15px; }
.btn {
  display: flex;
  align-items: center;
  gap: 4px;
  height: 36px;
  padding: 0 12px;
  border: 0;
  border-radius: 4px;
  color: #fff;
  font-size: 15px;
  line-height: 24px;
  white-space: nowrap;
}
.round { height: 37px; margin-right: 4px; padding: 0 13px; border-radius: 18px; }
.blue { background: #1c84c6; }
.green { background: #1ab394; }
.orange { background: #f8ac59; }
.red { background: #ed5565; }
.green.dim { background: #76d9c2; }
.red.dim { background: #f49aa5; }
.list { flex: 1; padding: 18px 19px; }
.actions { display: flex; gap: 4px; margin-bottom: 13px; }
.tools { display: flex; margin-left: auto; height: 42px; border: 1px solid #e6e8ea; border-radius: 4px; }
.tools button { display: flex; align-items: center; justify-content: center; width: 48px; padding: 0; border: 0; border-right: 1px solid #e6e8ea; background: none; }
.tools button:last-child { width: 60px; border: 0; }

table { width: 100%; border-collapse: collapse; table-layout: fixed; }
th, td { height: 47px; padding: 0 8px; border-bottom: 1px solid #e7e9eb; text-align: left; font-weight: 400; }
th { height: 39px; background: #eff0f8; border-color: #dfe2e7; }
.hover { background: #f2f4f5; }
.c-box { position: relative; width: 45px; padding: 0 3px 6px 0; text-align: center; }
.c-name, .c-state { width: 16%; }
.c-date { width: 20%; }
.c-ops { text-align: center; }
input[type="checkbox"] { width: 15px; height: 15px; margin: 0; vertical-align: middle; }
.cursor { position: absolute; left: 19px; top: 23px; }
.ops { display: flex; justify-content: center; gap: 4px; }
.small { height: 27px; padding: 0 6px; gap: 0; border-radius: 3px; }
.info { margin-top: 22px; }

/* desktop taskbar */
.taskbar { display: flex; height: 54px; background: linear-gradient(90deg, #372626, #3b2424 60%, #3d2c28); color: #f2eeee; }
.start { width: 65px; }
.wsearch { display: flex; align-items: center; width: 464px; padding-left: 15px; gap: 15px; border: 1px solid #c4c4c4; background: #f0f0f1; }
.wsearch input { flex: 1; min-width: 0; border: 0; padding: 0; background: none; outline: 0; font-size: 22px; }
.wsearch ::placeholder { color: #2a2a2a; }
.apps { display: flex; gap: 12px; padding-left: 6px; }
.apps button { width: 54px; border: solid transparent; border-width: 3px 0; }
.apps .view { margin-right: 3px; }
.apps .open { border-bottom-color: #82b4d8; }
.apps .current { width: 64px; margin: 0 -5px; background: #5a4a4b; }
.tray { display: flex; align-items: center; gap: 14px; margin-left: auto; font-family: "Noto Sans", "Noto Sans CJK SC", sans-serif; }
.ime { font-size: 21px; }
.clock { margin-left: -1px; font-size: 17px; line-height: 25px; text-align: center; }
.badge { font-size: 17px; font-weight: 600; fill: #fff; }
.tray .clock + svg { margin-left: 11px; }
.peek { width: 1px; height: 54px; margin: 0 5px 0 1px; background: #8a7e7b; }
```
